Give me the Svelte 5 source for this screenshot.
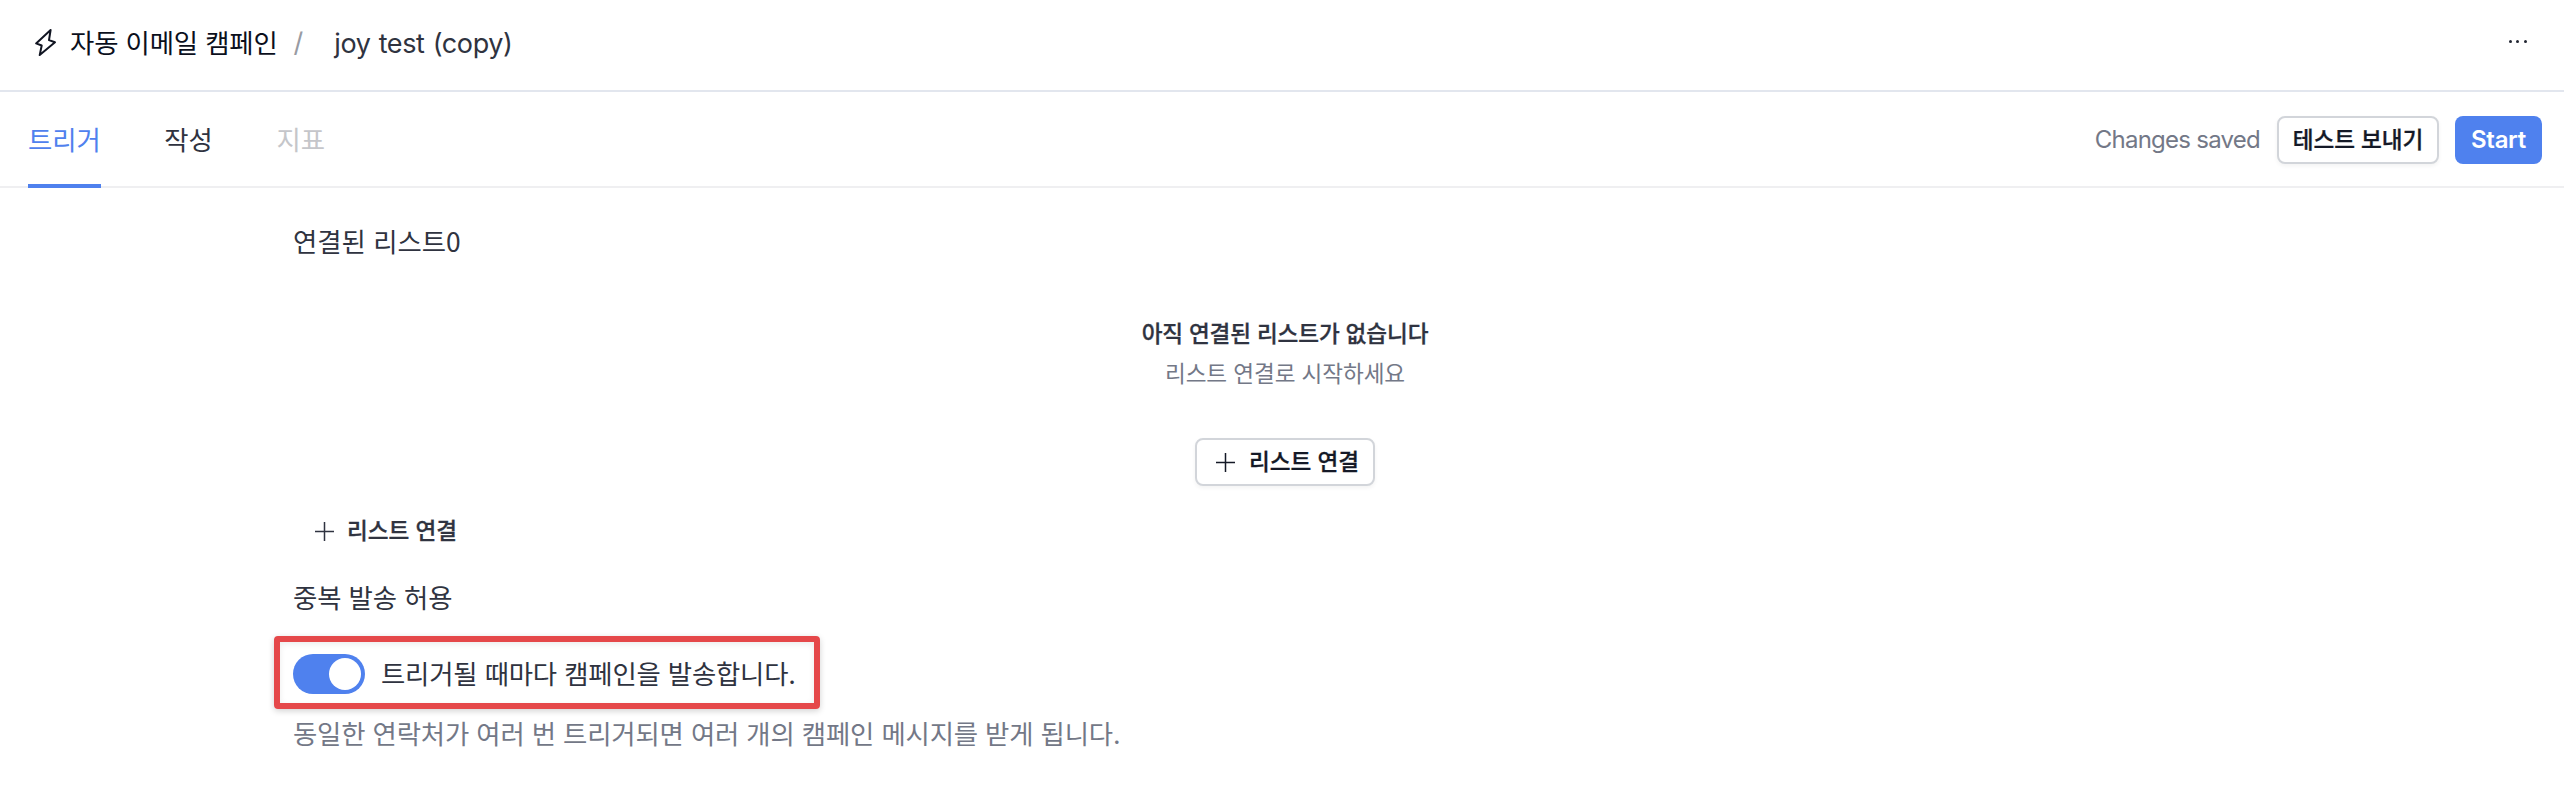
<script>
  const tabs = [
    { label: '트리거', state: 'active' },
    { label: '작성', state: '' },
    { label: '지표', state: 'disabled' }
  ];
  let allowRepeat = $state(true);
</script>

{#snippet plus()}
  <svg class="plus" viewBox="0 0 19 19" aria-hidden="true"><path d="M9.5 0v19M0 9.5h19" /></svg>
{/snippet}

<header>
  <svg class="bolt" viewBox="0 0 24 30" aria-hidden="true">
    <path d="M17.6 2 3.1 15.4l5.6 2.1-2 9.6L22 14.3l-6-2.2z" />
  </svg>
  <span class="root">자동 이메일 캠페인</span>
  <span class="slash">/</span>
  <span class="name">joy test (copy)</span>
  <button class="more" aria-label="more"><i></i><i></i><i></i></button>
</header>

<nav>
  {#each tabs as tab}
    <button class="tab {tab.state}">{tab.label}</button>
  {/each}
  <div class="actions">
    <span class="saved">Changes saved</span>
    <button class="btn outline test">테스트 보내기</button>
    <button class="btn primary">Start</button>
  </div>
</nav>

<main>
  <h2>연결된 리스트<span class="count">0</span></h2>
  <section class="empty">
    <strong>아직 연결된 리스트가 없습니다</strong>
    <p>리스트 연결로 시작하세요</p>
    <button class="btn outline connect">{@render plus()}리스트 연결</button>
  </section>
  <button class="btn ghost">{@render plus()}리스트 연결</button>
  <h2 class="repeat">중복 발송 허용</h2>
  <div class="highlight">
    <button
      class="toggle"
      class:on={allowRepeat}
      role="switch"
      aria-checked={allowRepeat}
      aria-label="toggle"
      onclick={() => (allowRepeat = !allowRepeat)}><i></i></button>
    <span>트리거될 때마다 캠페인을 발송합니다.</span>
  </div>
  <p class="help">동일한 연락처가 여러 번 트리거되면 여러 개의 캠페인 메시지를 받게 됩니다.</p>
</main>

<style>
  :global(body) {
    background: #fff;
    font-family: Inter, 'Noto Sans CJK KR', sans-serif;
    font-size: 26.4px;
    line-height: 40px;
    color: #2f3340;
    white-space: nowrap;
  }
  * { box-sizing: border-box; }
  button {
    font: inherit;
    color: inherit;
    border: 0;
    background: none;
    padding: 0;
  }
  h2, p { margin: 0; font-weight: 400; font-size: inherit; }
  svg { fill: none; stroke: currentColor; flex: none; }

  header {
    height: 92px;
    display: flex;
    align-items: center;
    padding: 0 37px 4px 33px;
    border-bottom: 2px solid #e2e6ee;
  }
  .bolt {
    width: 24px;
    height: 30px;
    margin-right: 13px;
    color: #111522;
    stroke-width: 2;
    stroke-linejoin: round;
  }
  .root { color: #0b0f1c; letter-spacing: -0.15px; }
  .slash { color: #989ba3; margin-left: 16px; font-size: 27px; }
  .name { margin-left: 31px; padding-top: 1px; font-size: 27px; letter-spacing: -0.4px; word-spacing: 1px; }
  .more {
    margin-left: auto;
    margin-top: -3px;
    display: flex;
    gap: 4.6px;
    color: #222632;
  }
  .more i { width: 3px; height: 3px; border-radius: 50%; background: currentColor; }

  nav {
    height: 96px;
    display: flex;
    align-items: stretch;
    gap: 63.5px;
    padding: 0 22px 0 28px;
    border-bottom: 2px solid #efeff1;
  }
  .tab { position: relative; padding-top: 1px; }
  .active { color: #4f81ee; }
  .active::after {
    content: '';
    position: absolute;
    left: 0;
    right: 0;
    bottom: -2px;
    height: 4px;
    background: #4f81ee;
  }
  .disabled { color: #c5c6ca; }
  .actions {
    margin-left: auto;
    padding-top: 2px;
    display: flex;
    align-items: center;
    gap: 16px;
  }
  .saved { font-size: 24px; letter-spacing: -0.75px; margin-right: 1px; color: #737887; }

  .btn {
    height: 48px;
    display: flex;
    align-items: center;
    justify-content: center;
    border-radius: 8px;
    font-size: 22.6px;
    font-weight: 500;
    -webkit-text-stroke: 0.3px currentColor;
  }
  .outline {
    border: 2px solid #d2d5da;
    background: #fff;
    color: #141927;
    box-shadow: 0 2px 4px rgba(0, 0, 0, 0.05);
  }
  .test { width: 162px; }
  .primary {
    width: 87px;
    background: #4f81ee;
    color: #fff;
    font-size: 24px;
    font-weight: 600;
    letter-spacing: -0.3px;
    -webkit-text-stroke: 0;
  }
  .plus { width: 19px; height: 19px; stroke-width: 1.5; margin-right: 14px; }

  main {
    padding: 34px 287px 0 293px;
    display: flex;
    flex-direction: column;
    align-items: flex-start;
  }
  .count { font-family: 'Noto Sans CJK KR', sans-serif; line-height: 1; }
  .empty {
    align-self: stretch;
    display: flex;
    flex-direction: column;
    align-items: center;
    margin-top: 52px;
    font-size: 22.6px;
    letter-spacing: -0.1px;
  }
  .empty strong { font-weight: 500; -webkit-text-stroke: 0.3px currentColor; }
  .empty p { color: #737887; }
  .connect { width: 180px; margin-top: 44px; padding-left: 5px; }
  .ghost { margin: 21px 0 0 21.5px; }
  .ghost .plus { margin-right: 13.5px; }
  .repeat { margin-top: 23px; letter-spacing: -0.15px; }
  .highlight {
    height: 73px;
    width: 545.5px;
    margin: 17.5px 0 0 -19px;
    padding: 4px 13px 0;
    display: flex;
    align-items: center;
    gap: 16px;
    border: 6px solid #e5484a;
    border-radius: 4px;
    letter-spacing: -0.18px;
    box-shadow: 0 2px 6px rgba(0, 0, 0, 0.18), inset 0 2px 6px rgba(0, 0, 0, 0.08);
  }
  .toggle {
    width: 72px;
    height: 40px;
    padding: 4px;
    flex: none;
    display: flex;
    border-radius: 20px;
    background: #c5c6ca;
  }
  .toggle i { width: 32px; height: 32px; border-radius: 50%; background: #fff; }
  .on { background: #4f81ee; justify-content: flex-end; }
  .help { margin-top: 5.5px; color: #737887; letter-spacing: -0.17px; }
</style>
